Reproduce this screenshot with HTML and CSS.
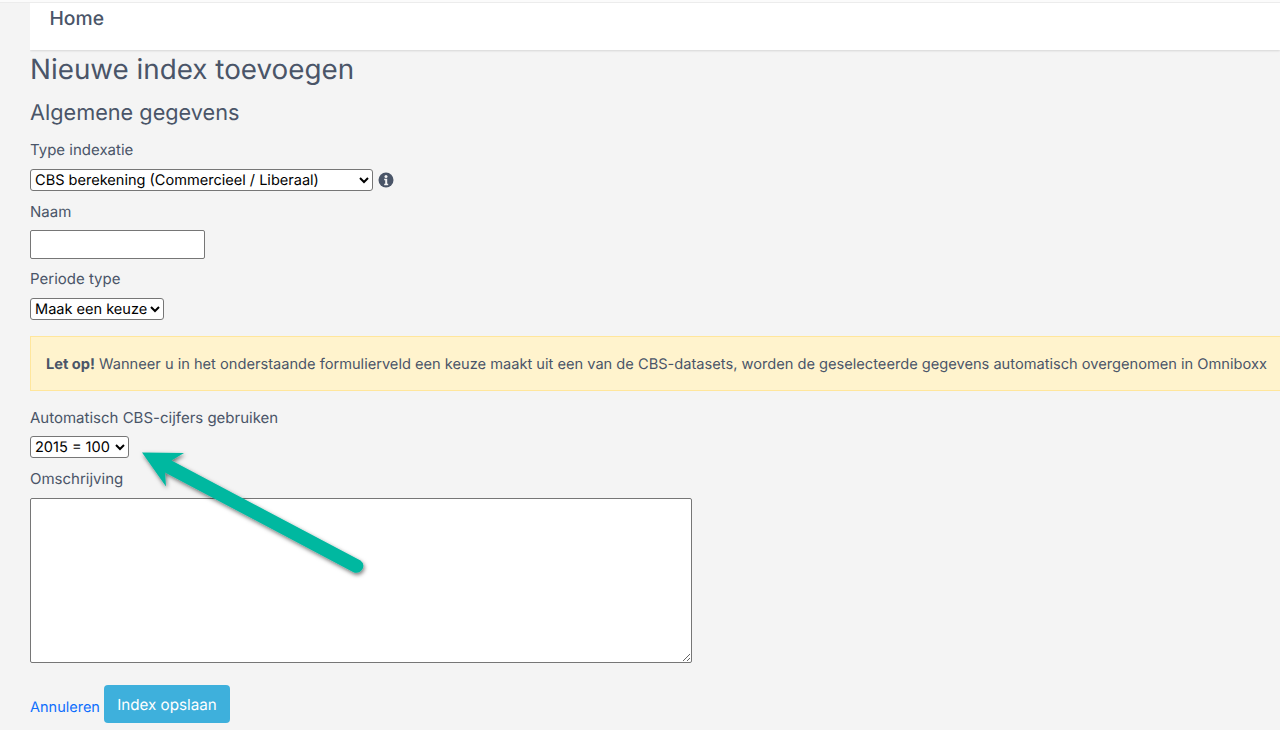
FILE: index.html
```html
<!DOCTYPE html>
<html lang="nl">
<head>
<meta charset="utf-8">
<title>Nieuwe index toevoegen</title>
<link rel="stylesheet" href="styles.css">
</head>
<body>
<div class="top-strip"></div>
<nav class="topnav"><a class="nav-link" href="#">Home</a></nav>
<main class="content">
  <h1 class="page-title">Nieuwe index toevoegen</h1>
  <h2 class="section-title">Algemene gegevens</h2>
  <form class="form">
    <label class="field-label label-type">Type indexatie</label>
    <div class="select-row">
      <select class="select select-type"><option>CBS berekening (Commercieel / Liberaal)</option></select>
      <svg class="info-icon" viewBox="0 0 16 16" aria-hidden="true"><circle cx="8" cy="8" r="7.5" fill="#4a5568"/><circle cx="8" cy="4.4" r="1.5" fill="#f4f4f4"/><path d="M6.2 6.8h3v5h1v1.4H6.2v-1.4h1v-3.6h-1z" fill="#f4f4f4"/></svg>
    </div>
    <label class="field-label label-naam">Naam</label>
    <input class="text-input" type="text">
    <label class="field-label label-periode">Periode type</label>
    <select class="select select-periode"><option>Maak een keuze</option></select>
    <div class="alert"><strong>Let op!</strong> Wanneer u in het onderstaande formulierveld een keuze maakt uit een van de CBS-datasets, worden de geselecteerde gegevens automatisch overgenomen in Omniboxx</div>
    <label class="field-label label-auto">Automatisch CBS-cijfers gebruiken</label>
    <select class="select select-cbs"><option>2015 = 100</option></select>
    <label class="field-label label-omschrijving">Omschrijving</label>
    <textarea class="textarea"></textarea>
    <div class="actions">
      <a class="cancel" href="#">Annuleren</a>
      <button class="save" type="button">Index opslaan</button>
    </div>
  </form>
</main>
<svg class="arrow" viewBox="0 0 1280 730" aria-hidden="true">
  <defs><filter id="arrow-shadow" x="-20%" y="-20%" width="140%" height="140%"><feDropShadow dx="1" dy="2" stdDeviation="2" flood-color="#000" flood-opacity="0.55"/></filter></defs>
  <path filter="url(#arrow-shadow)" fill="#00b8a0" d="M142 452.500 L184 453 L171.500 460.500 L360.500 560.500 Q365 564 362.500 569 Q359 574 354 572.500 L165 472.500 L166 486.500 Z"/>
</svg>
</body>
</html>
```
FILE: styles.css
```css
* { box-sizing: border-box; }
html, body { margin: 0; height: 730px; overflow: hidden; }
body {
  background: #f4f4f4;
  color: #4a5568;
  font-family: Inter, "Liberation Sans", sans-serif;
  font-size: 15px;
  line-height: 21px;
  padding-left: 30px;
  text-rendering: geometricPrecision;
}
.top-strip {
  height: 3px;
  margin-left: -30px;
  background: #fbfbfb;
  border-bottom: 1px solid #ececec;
}
.topnav {
  position: relative;
  height: 47px;
  background: #fff;
  box-shadow: 0 1px 2px rgba(0, 0, 0, 0.12);
  clip-path: inset(0 -10px -10px 0);
  padding-left: 19.500px;
}
.nav-link {
  color: #4a5568;
  font-size: 19.300px;
  font-weight: 500;
  line-height: 31px;
  text-decoration: none;
}
.content { width: 1300px; }
.page-title {
  margin: 0;
  padding-top: 1px;
  font-size: 27.800px;
  font-weight: 400;
  line-height: 36px;
}
.section-title {
  margin: 13px 0 0;
  font-size: 21.700px;
  font-weight: 400;
  line-height: 26px;
}
.form { display: flex; flex-direction: column; align-items: flex-start; }
.field-label { display: block; margin-top: 13px; }
.select-row { display: flex; align-items: center; gap: 5px; margin-top: 9px; }
.select {
  height: 22px;
  background: #fff;
  border: 1px solid #767676;
  border-radius: 3px;
  color: #000;
  font-family: Inter, "Liberation Sans", sans-serif;
  font-size: 14.550px;
  text-rendering: geometricPrecision;
}
.select-type { width: 343px; }
.info-icon { width: 16px; height: 16px; }
.label-naam { margin-top: 10px; }
.text-input {
  width: 175px;
  height: 29px;
  margin-top: 8px;
  background: #fff;
  border: 1px solid #767676;
  border-radius: 2px;
}
.label-periode { margin-top: 9px; }
.select-periode { width: 134px; margin-top: 9px; }
.alert {
  width: 1300px;
  height: 55px;
  margin-top: 16px;
  padding: 17px 15px;
  background: #fff3cd;
  border: 1px solid #ffe69c;
  font-size: 14.640px;
  white-space: nowrap;
}
.label-auto { margin-top: 16px; }
.select-cbs { width: 99px; margin-top: 8px; }
.label-omschrijving { margin-top: 10px; }
.textarea {
  width: 662px;
  height: 165px;
  margin-top: 9px;
  background: #fff;
  border: 1px solid #767676;
  border-radius: 2px;
}
.actions { display: flex; align-items: flex-end; gap: 4px; margin-top: 22px; }
.cancel { color: #0d6efd; font-size: 14.500px; line-height: 21px; padding-bottom: 5px; text-decoration: none; }
.save {
  width: 126px;
  height: 38px;
  background: #3eb0dc;
  border: 0;
  border-radius: 4px;
  color: #fff;
  font-family: Inter, "Liberation Sans", sans-serif;
  font-size: 15.200px;
  padding: 0;
  text-rendering: geometricPrecision;
}
.arrow { position: absolute; left: 0; top: 0; width: 1280px; height: 730px; pointer-events: none; }
```
